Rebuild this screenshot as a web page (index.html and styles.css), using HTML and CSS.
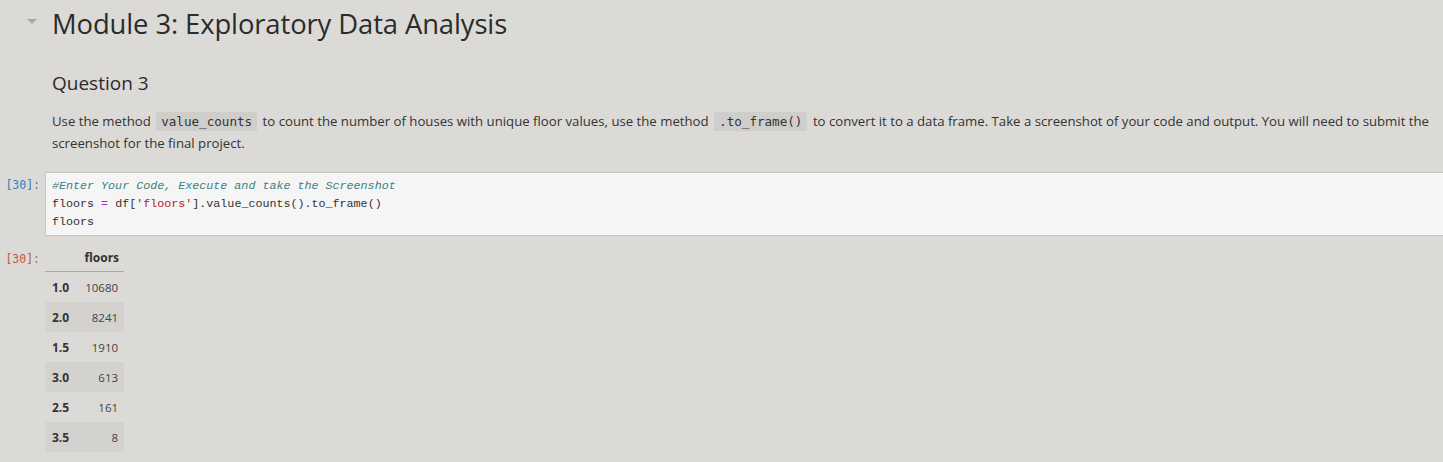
FILE: index.html
```html
<!DOCTYPE html>
<html>
<head>
<meta charset="utf-8">
<link rel="stylesheet" href="styles.css">
</head>
<body>
<div class="nb">
  <div class="heading">
    <svg class="caret" width="10" height="6" viewBox="0 0 10 6"><path d="M0 0 L10 0 L5 5 Z" fill="#a9a9a9"/></svg>
    <h1>Module 3: Exploratory Data Analysis</h1>
  </div>
  <div class="md">
    <h2>Question 3</h2>
    <p><span>Use the method </span><code>value_counts</code><span> to count the number of houses with unique floor values, use the method </span><code>.to_frame()</code><span> to convert it to a data frame. Take a screenshot of your code and output. You will need to submit the</span><br><span>screenshot for the final project.</span></p>
  </div>
  <div class="cell">
    <div class="prompt in">[30]:</div>
    <div class="code"><span class="cm">#Enter Your Code, Execute and take the Screenshot</span>
<span>floors </span><span class="op">=</span><span> df[</span><span class="st">'floors'</span><span>].value_counts().to_frame()</span>
<span>floors</span></div>
  </div>
  <div class="cell out">
    <div class="prompt outp">[30]:</div>
    <table class="df">
      <thead><tr><th></th><th>floors</th></tr></thead>
      <tbody>
        <tr><th>1.0</th><td>10680</td></tr>
        <tr><th>2.0</th><td>8241</td></tr>
        <tr><th>1.5</th><td>1910</td></tr>
        <tr><th>3.0</th><td>613</td></tr>
        <tr><th>2.5</th><td>161</td></tr>
        <tr><th>3.5</th><td>8</td></tr>
      </tbody>
    </table>
  </div>
</div>
</body>
</html>
```
FILE: styles.css
```css
html, body {
  margin: 0;
  padding: 0;
  background: #dbdad6;
}
body {
  font-family: "Open Sans", "Noto Sans", sans-serif;
  color: #333;
  overflow: hidden;
}
.nb {
  width: 1460px;
}
.heading {
  display: flex;
  align-items: center;
  height: 48px;
}
.caret {
  margin-left: 27px;
  margin-right: 15px;
  margin-top: -4px;
}
h1 {
  margin: 0;
  font-size: 27.4px;
  font-weight: 400;
  color: #2b2b2b;
  line-height: 48px;
  letter-spacing: -0.1px;
}
.md {
  padding-left: 52px;
  width: 1386px;
}
h2 {
  margin: 21px 0 0;
  font-size: 19px;
  font-weight: 400;
  line-height: 28px;
  color: #2b2b2b;
}
p {
  margin: 13px 0 0;
  font-size: 13.2px;
  line-height: 22px;
  color: #333;
  white-space: nowrap;
}
code {
  display: inline-block;
  font-family: "DejaVu Sans Mono", monospace;
  font-size: 12.6px;
  line-height: 19px;
  background: #cfceca;
  padding: 0 5px;
  margin: 0 2px;
  color: #333;
}
.cell {
  display: flex;
  margin-top: 18px;
}
.prompt {
  width: 40px;
  flex: none;
  text-align: right;
  font-family: "DejaVu Sans Mono", monospace;
  font-size: 11.5px;
  padding-right: 5px;
  box-sizing: content-box;
}
.prompt.in {
  color: #307fc1;
  padding-top: 6px;
}
.prompt.outp {
  color: #bf5b3d;
  padding-top: 8px;
}
.code {
  flex: 1;
  background: #f5f5f5;
  border: 1px solid #c5c4c0;
  white-space: pre;
  font-family: "Liberation Mono", monospace;
  font-size: 11.7px;
  line-height: 18px;
  padding: 4px 6px 5px 6px;
  color: #333;
  height: 53px;
}
.cm { color: #408080; font-style: italic; }
.op { color: #aa22ff; }
.st { color: #ba2121; }
.cell.out {
  margin-top: 8px;
}
.df {
  border-collapse: collapse;
  font-size: 12px;
  color: #333;
}
.df thead th {
  text-align: right;
  font-weight: 700;
  height: 27px;
  padding: 0 5px;
  border-bottom: 1px solid #aaa;
  vertical-align: middle;
}
.df tbody th {
  font-weight: 700;
  text-align: right;
  padding: 0 8px 0 7px;
  height: 30px;
}
.df tbody td {
  text-align: right;
  padding: 0 6px 0 8px;
  font-size: 11.5px;
  color: #444;
}
.df tbody tr:nth-child(even) {
  background: #d3d2ce;
}
```
